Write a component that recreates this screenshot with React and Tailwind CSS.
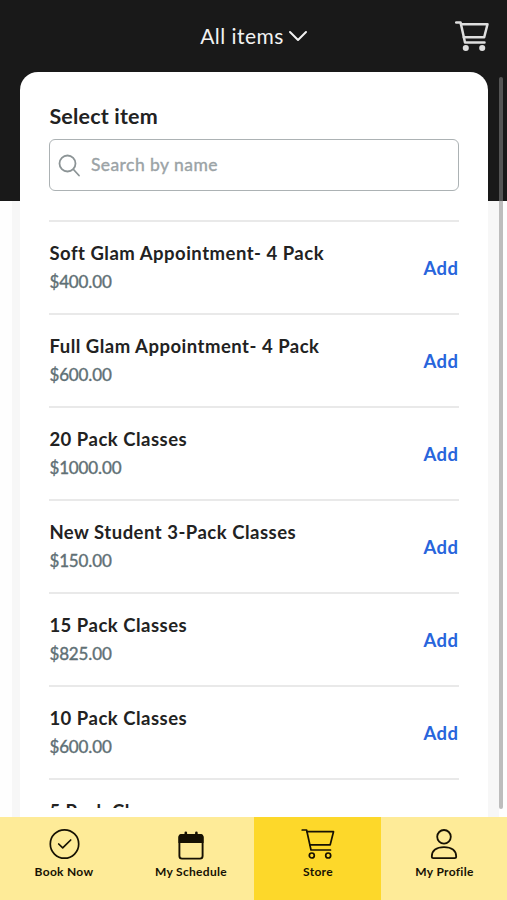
import React, { useState } from "react";

const items = [
    { name: "Soft Glam Appointment- 4 Pack", price: "$400.00" },
    { name: "Full Glam Appointment- 4 Pack", price: "$600.00" },
    { name: "20 Pack Classes", price: "$1000.00" },
    { name: "New Student 3-Pack Classes", price: "$150.00" },
    { name: "15 Pack Classes", price: "$825.00" },
    { name: "10 Pack Classes", price: "$600.00" },
    { name: "5 Pack Classes" },
];

function CartIcon({ className, filled }) {
    return (
        <svg viewBox="0 0 34 31" className={className} fill="none" stroke="currentColor" strokeWidth={filled ? 2.5 : 1.7} strokeLinecap="round" strokeLinejoin="round">
            <path d="M1.2 1.5H5.6L10 21.5H29.5" />
            <path d="M6 3.2H32.5L29.2 16.3H8.8" />
            <circle cx="10.8" cy="27" r={filled ? 1.8 : 2.5} fill={filled ? "currentColor" : "none"} />
            <circle cx="27.2" cy="27" r={filled ? 1.8 : 2.5} fill={filled ? "currentColor" : "none"} />
        </svg>
    );
}

function CheckIcon() {
    return (
        <svg viewBox="0 0 32 32" className="h-8 w-8" fill="none" stroke="currentColor" strokeWidth="1.7" strokeLinecap="round" strokeLinejoin="round">
            <circle cx="16.5" cy="16" r="14.2" />
            <path d="M10.7 16L14.7 19.8L22.7 12" />
        </svg>
    );
}

function CalendarIcon() {
    return (
        <svg viewBox="0 0 32 32" className="h-8 w-8" fill="none" stroke="currentColor" strokeWidth="1.9" strokeLinecap="round">
            <rect x="4.4" y="7" width="23.2" height="23.6" rx="2.6" />
            <path d="M4.4 14V9.4Q4.4 7 6.8 7H25.2Q27.6 7 27.6 9.4V14Z" fill="currentColor" />
            <path d="M10.8 4.8V8M21.4 4.8V8" strokeWidth="2.6" />
        </svg>
    );
}

function ProfileIcon() {
    return (
        <svg viewBox="0 0 32 32" className="h-8 w-8" fill="none" stroke="currentColor" strokeWidth="1.8" strokeLinejoin="round">
            <circle cx="16" cy="8.8" r="6.8" />
            <path d="M3.8 28.6C3.8 22.5 8.5 19.1 16 19.1S28.2 22.5 28.2 28.6Q28.2 30.2 26.6 30.2H5.4Q3.8 30.2 3.8 28.6Z" />
        </svg>
    );
}

const tabs = [
    { label: "Book Now", icon: <CheckIcon /> },
    { label: "My Schedule", icon: <CalendarIcon /> },
    { label: "Store", icon: <CartIcon className="h-8 w-[34px]" /> },
    { label: "My Profile", icon: <ProfileIcon /> },
];

function ItemRow({ item }) {
    return (
        <li className="flex h-[93px] shrink-0 items-start justify-between border-t-2 border-[#e9e9e9] pt-[17px]">
            <div>
                <p className="text-[18.5px] leading-7 font-bold tracking-[0.5px] text-[#222]">{item.name}</p>
                {item.price && (
                    <p className="mt-px text-[17px] leading-7 tracking-[-0.12px] text-[#5f7075] [-webkit-text-stroke:0.4px_#5f7075]">
                        {item.price}
                    </p>
                )}
            </div>
            {item.price && (
                <button className="mt-[15px] text-[18.5px] leading-7 font-bold tracking-[0.5px] text-[#2865dc]">Add</button>
            )}
        </li>
    );
}

function App() {
    const [search, setSearch] = useState("");
    const [active, setActive] = useState("Store");

    return (
        <div className="relative flex h-[900px] w-[507px] flex-col overflow-hidden bg-[linear-gradient(#191919_201px,transparent_201px),linear-gradient(90deg,#fefefe_12px,#f7f7f7_12px,#f7f7f7_499px,#fefefe_499px)] font-['Lato','Open_Sans',sans-serif]">
            <header className="grid h-[72px] shrink-0 grid-cols-[1fr_auto_1fr] items-center">
                <button className="col-start-2 flex items-center gap-1 pl-px text-[21px] tracking-[0.45px] text-[#f2f2f2]">
                    All items
                    <svg viewBox="0 0 20 14" className="h-[14px] w-5" fill="none" stroke="currentColor" strokeWidth="2" strokeLinecap="round" strokeLinejoin="round">
                        <path d="M2 3L10 11L18 3" />
                    </svg>
                </button>
                <CartIcon filled className="mr-[18px] h-[31px] w-[34px] justify-self-end text-[#dedede]" />
            </header>

            <main className="mr-[19px] ml-5 flex min-h-0 flex-1 flex-col rounded-t-[18px] bg-white px-[29.4px] pt-[30px] pb-[9px]">
                <h1 className="text-[21.5px] leading-7 font-bold tracking-[0.18px] text-[#222]">Select item</h1>
                <label className="mt-[9px] flex h-[52px] shrink-0 items-center rounded-md border-[1.5px] border-[#acb2b4] pl-2">
                    <svg viewBox="0 0 24 24" className="h-6 w-6 text-[#8c9496]" fill="none" stroke="currentColor" strokeWidth="1.8" strokeLinecap="round">
                        <circle cx="9.5" cy="10.5" r="8" />
                        <path d="M15.5 16.5L21 22.5" />
                    </svg>
                    <input
                        value={search}
                        onChange={(e) => setSearch(e.target.value)}
                        placeholder="Search by name"
                        className="ml-[8.5px] flex-1 pt-px text-[17.5px] tracking-[0.45px] outline-none placeholder:text-[#9ba3a6] [-webkit-text-stroke:0.4px_#9ba3a6]"
                    />
                </label>
                <ul className="mt-[29px] flex min-h-0 flex-1 flex-col overflow-hidden">
                    {items.map((item) => (
                        <ItemRow key={item.name} item={item} />
                    ))}
                </ul>
            </main>

            {/* scroll thumb */}
            <div className="absolute top-[77px] right-1 h-[732px] w-1 rounded-full bg-[linear-gradient(#555_124px,#bdbdbd_124px)]" />

            <nav className="relative grid h-[83px] shrink-0 grid-cols-[127px_127px_127px_126px] bg-[#feeb98] text-[#161103]">
                {tabs.map((tab) => (
                    <button
                        key={tab.label}
                        onClick={() => setActive(tab.label)}
                        className={`flex flex-col items-center pt-[11px] ${active === tab.label ? "bg-[#fdd82a]" : ""}`}
                    >
                        {tab.icon}
                        <span className="mt-[2px] pl-px text-[12px] leading-5 font-bold tracking-[0.3px]">{tab.label}</span>
                    </button>
                ))}
            </nav>
        </div>
    );
}

export default App;
